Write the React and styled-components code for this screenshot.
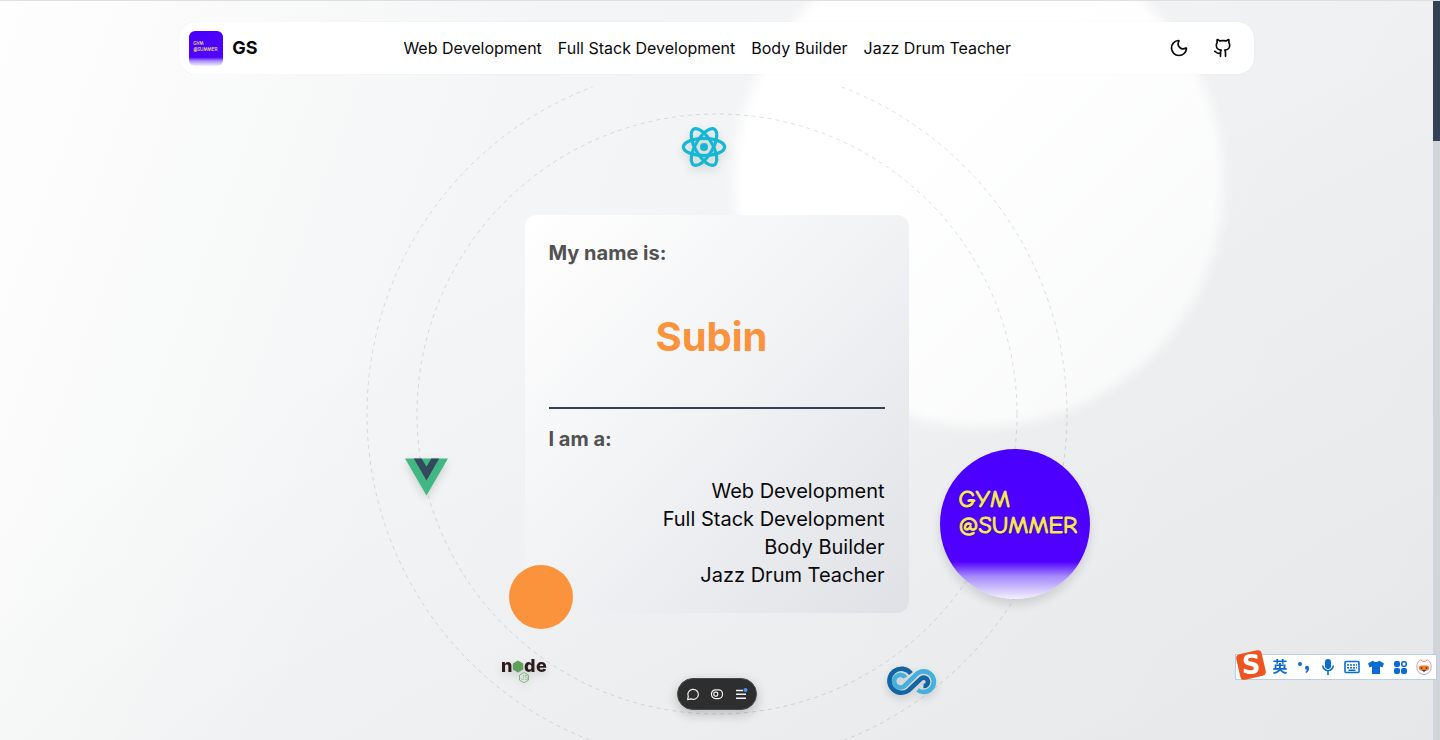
import React from 'react';
import styled, { createGlobalStyle, css } from 'styled-components';
import { Moon, Github } from 'lucide-react';

const SERVICES = ['Web Development', 'Full Stack Development', 'Body Builder', 'Jazz Drum Teacher'];

const GlobalStyle = createGlobalStyle`
  *, *::before, *::after { box-sizing: border-box; }
  body {
    margin: 0;
    font-family: Inter, "Liberation Sans", sans-serif;
    font-size: 16px;
    line-height: 24px;
    color: #09090b;
  }
  ul { list-style: none; margin: 0; padding: 0; }
  h1, h2, p { margin: 0; }
  button { font: inherit; color: inherit; background: none; border: 0; padding: 0; cursor: pointer; }
  a { color: inherit; text-decoration: none; }
  svg { display: block; }
`;

const Window = styled.div`
  display: grid;
  grid-template-columns: minmax(0, 1fr) 7px;
  height: 100vh;
  overflow: hidden;
  border-top: 1px solid #dfdfe0;
`;

const Page = styled.div`
  position: relative;
  display: flex;
  flex-direction: column;
  min-height: 0;
  overflow: hidden;
  background:
    linear-gradient(155deg, transparent 35%, rgba(0, 0, 0, 0.045)),
    linear-gradient(110deg, #fefefe, #f4f5f6 32%, #f0f1f3);
`;

const Glow = styled.div`
  position: absolute;
  top: -64px;
  left: calc(50% + 17px);
  width: 490px;
  height: 490px;
  border-radius: 50%;
  background: linear-gradient(to bottom right, #ffffff 40%, #f7f8f8);
  filter: blur(6px);
`;

const ScrollTrack = styled.div`
  background: #d1d5db;
`;

const ScrollThumb = styled.div`
  height: 19%;
  background: #334155;
`;

const Header = styled.header`
  position: relative;
  display: flex;
  align-items: center;
  justify-content: space-between;
  width: 75%;
  height: 52px;
  margin: 21px auto 0;
  padding: 0 21px 0 10px;
  border-radius: 16px;
  background: #ffffff;
  box-shadow: 0 0 1px rgba(0, 0, 0, 0.12);
`;

const Brand = styled.a`
  display: flex;
  align-items: center;
  gap: 9px;
  font-size: 18px;
  font-weight: 700;
`;

const Nav = styled.nav`
  padding-right: 12px;
`;

const NavList = styled.ul`
  display: flex;
  gap: 16px;
`;

const Actions = styled.div`
  display: flex;
  gap: 24px;
`;

const IconButton = styled.button`
  display: grid;
  place-items: center;
  width: 20px;
  height: 20px;
`;

const gymFill = css`
  background: linear-gradient(#4a00ff 0%, #5000ff 75%, #a68bfd 85%, #f4f0fd 100%);
  color: #f7e75a;
  font-family: "Comic Sans MS", "Comic Neue", "Open Sans", sans-serif;
`;

const GymThumb = styled.span`
  ${gymFill}
  width: 34px;
  height: 35px;
  padding: 9px 0 0 4px;
  border-radius: 6px;
  overflow: hidden;
  font-size: 5px;
  font-weight: 600;
  line-height: 6px;
`;

const GymBadge = styled.div`
  ${gymFill}
  position: absolute;
  left: calc(50% + 223px);
  top: calc(50% + 35px);
  width: 150px;
  height: 150px;
  padding: 37px 0 0 19px;
  border-radius: 50%;
  font-size: 24px;
  line-height: 26px;
  -webkit-text-stroke: 1px #f7e75a;
  text-shadow: 1px 1px 1px #15105a;
  white-space: nowrap;
  box-shadow: 0 6px 10px rgba(0, 0, 0, 0.12);
`;

const Hero = styled.main`
  position: relative;
  flex: 1;
  display: grid;
  place-items: center;
  min-height: 0;
  margin-top: 13px;
  overflow: hidden;
`;

const Orbits = styled.svg`
  position: absolute;
  left: calc(50% - 351px);
  top: calc(50% - 351px);
  width: 702px;
  height: 702px;
`;

const Satellite = styled.svg`
  position: absolute;
  left: calc(50% + ${(p) => p.$x}px);
  top: calc(50% + ${(p) => p.$y}px);
  overflow: visible;
  filter: drop-shadow(0 4px 4px rgba(0, 0, 0, 0.14));
`;

const Card = styled.section`
  position: relative;
  width: 384px;
  padding: 24px;
  border-radius: 12px;
  background: linear-gradient(to bottom right, #ffffff, #f1f2f4 50%, #e0e1e6);
`;

const CardLabel = styled.h2`
  font-size: 20px;
  font-weight: 700;
  line-height: 28px;
  color: #525252;
`;

const NameRow = styled.div`
  display: flex;
  justify-content: center;
  padding: 40px 10px 40px 0;
  border-bottom: 2px solid #334155;
  margin-bottom: 16px;
`;

const Name = styled.h1`
  font-size: 40px;
  font-weight: 700;
  line-height: 60px;
  color: #fb923c;
`;

const Roles = styled.ul`
  padding-top: 24px;
  font-size: 20px;
  line-height: 28px;
  text-align: right;
`;

const Dot = styled.div`
  position: absolute;
  left: -16px;
  bottom: -16px;
  width: 64px;
  height: 64px;
  border-radius: 50%;
  background: #fb923c;
`;

const Dock = styled.div`
  position: absolute;
  left: calc(50% - 40px);
  bottom: 30px;
  display: flex;
  align-items: center;
  justify-content: center;
  gap: 8px;
  width: 80px;
  height: 32px;
  border-radius: 16px;
  background: #2e2e2e;
  border: 1px solid #4a4a4a;
  color: #f2f2f2;
  box-shadow: 0 4px 12px rgba(0, 0, 0, 0.22);
`;

const DockButton = styled.button`
  width: 16px;
  height: 16px;
`;

const InputBar = styled.div`
  position: fixed;
  right: 3px;
  bottom: 60px;
  display: flex;
  align-items: center;
  gap: 8px;
  height: 26px;
  padding: 0 4px 0 0;
  background: #ffffff;
  border: 1px solid #b9cfe6;
  color: #0a6cd0;
`;

const InputLogo = styled.svg`
  margin: -4px -4px 0 0;
  flex: none;
  overflow: visible;
`;

const InputButton = styled.button`
  width: 16px;
  height: 16px;
  font-family: Inter, "Noto Sans CJK SC", sans-serif;
  font-size: 15px;
  font-weight: 700;
  line-height: 16px;
`;

function ReactLogo() {
  return (
    <Satellite $x={-36} $y={-288} width="46" height="42" viewBox="-23 -21 46 42" fill="none" stroke="#14b8d4" strokeWidth="3.200">
      {[0, 60, 120].map((angle) => (
        <ellipse key={angle} rx="20.600" ry="8.600" transform={`rotate(${angle})`} />
      ))}
      <circle r="4" fill="#14b8d4" stroke="none" />
    </Satellite>
  );
}

function VueLogo() {
  return (
    <Satellite $x={-312} $y={44} width="43" height="38" viewBox="0 0 44 38">
      <path d="M0 0h44L22 38z" fill="#41b883" />
      <path d="M9 0h8l5 8.500 5-8.500h8L22 22.500z" fill="#34495e" />
    </Satellite>
  );
}

function NodeLogo() {
  return (
    <Satellite $x={-215} $y={241} width="46" height="30" viewBox="0 0 46 30">
      <g fill="#2a1a1c" fontFamily="Inter, sans-serif" fontWeight="800" fontSize="18">
        <text x="-1" y="17">n</text>
        <text x="22" y="17">d</text>
        <text x="34" y="17">e</text>
      </g>
      <path d="M16 5.500l5.200 3v6l-5.200 3-5.200-3v-6z" fill="#5fa05b" />
      <path d="M22 17.500l4.500 2.600v5L22 27.700l-4.500-2.600v-5z" fill="none" stroke="#7db77a" />
      <text x="19" y="25" fill="#7db77a" fontFamily="Inter, sans-serif" fontSize="6">JS</text>
    </Satellite>
  );
}

function LoopLogo() {
  return (
    <Satellite $x={169} $y={253} width="51" height="29" viewBox="1 0 50 29" fill="none">
      <path d="M25.500 6.500A12 12 0 1 0 23 23.500L35.500 11.700A4.200 4.200 0 1 1 38 19" stroke="#1264a5" strokeWidth="4.600" />
      <path d="M20 10.500A6.300 6.300 0 1 0 19 19L31 7.200A10.300 10.300 0 1 1 32 23" stroke="#45b0dc" strokeWidth="4.600" />
    </Satellite>
  );
}

function ToolDock() {
  return (
    <Dock>
      <DockButton aria-label="Comments">
        <svg width="16" height="16" viewBox="0 0 16 16" fill="none" stroke="currentColor" strokeWidth="1.200">
          <path d="M2.600 13.600l.7-3.200a5.300 5 0 1 1 2.700 2.500z" strokeLinejoin="round" />
        </svg>
      </DockButton>
      <DockButton aria-label="Preview">
        <svg width="16" height="16" viewBox="0 0 16 16" fill="none" stroke="currentColor" strokeWidth="1.200">
          <rect x="2.500" y="3.800" width="11" height="8.800" rx="4" />
          <rect x="4.800" y="6.200" width="4" height="4" rx="1.600" />
        </svg>
      </DockButton>
      <DockButton aria-label="Menu">
        <svg width="16" height="16" viewBox="0 0 16 16" stroke="currentColor" strokeWidth="1.400">
          <path d="M3 4.500h7M3 8.300h10M3 12.200h10" />
          <circle cx="12.500" cy="4" r="2" fill="#4b96f5" stroke="none" />
        </svg>
      </DockButton>
    </Dock>
  );
}

function InputMethodBar() {
  return (
    <InputBar>
      <InputLogo width="32" height="32" viewBox="0 0 32 32">
        <rect x="2" y="3" width="26" height="26" rx="4" fill="#ee5420" transform="rotate(-13 15 16)" />
        <text x="15" y="25" textAnchor="middle" fill="#ffffff" fontFamily="DejaVu Sans, sans-serif" fontWeight="700" fontSize="26">S</text>
      </InputLogo>
      <InputButton>英</InputButton>
      <InputButton aria-label="Punctuation">
        <svg width="16" height="16" viewBox="0 0 16 16" fill="currentColor">
          <circle cx="4" cy="5" r="2" />
          <path d="M9 8.500a2 2 0 1 1 4 .5c0 2.500-1 4-3 5l-.6-1c1-.6 1.400-1.400 1.400-2.200A2 2 0 0 1 9 8.500z" />
        </svg>
      </InputButton>
      <InputButton aria-label="Voice input">
        <svg width="16" height="16" viewBox="0 0 16 16" fill="none" stroke="currentColor" strokeWidth="1.600">
          <rect x="5" y="0" width="6" height="10" rx="3" fill="currentColor" stroke="none" />
          <path d="M2.800 6.500a5.200 5.200 0 0 0 10.400 0M8 12v4" />
        </svg>
      </InputButton>
      <InputButton aria-label="Keyboard">
        <svg width="16" height="16" viewBox="0 0 16 16" fill="none" stroke="currentColor" strokeWidth="1.600">
          <rect x="1" y="2.500" width="14" height="11" rx="1" />
          <path d="M3 6h10M3 8.700h10" strokeDasharray="2 1" />
          <path d="M4.500 11.300h7" />
        </svg>
      </InputButton>
      <InputButton aria-label="Skins">
        <svg width="16" height="16" viewBox="0 0 16 16" fill="currentColor">
          <path d="M5 1.500c1 2 5 2 6 0l5 3-1.500 4-2.500-1V15H4V7.500l-2.500 1L0 4.500z" />
        </svg>
      </InputButton>
      <InputButton aria-label="Toolbox">
        <svg width="16" height="16" viewBox="0 0 16 16" fill="currentColor">
          <rect x="2" y="2" width="6" height="6" rx="2" />
          <rect x="2" y="9" width="6" height="6" rx="2" />
          <rect x="9" y="9" width="6" height="6" rx="2" />
          <rect x="9.800" y="2.800" width="4.400" height="4.400" rx="1.500" fill="none" stroke="currentColor" strokeWidth="1.600" />
        </svg>
      </InputButton>
      <InputButton aria-label="Assistant">
        <svg width="16" height="16" viewBox="0 0 16 16">
          <path d="M1 9C0.500 4 3 1 4.500 .8L7 2.500h2L11.500 .8C13 1 15.500 4 15 9" fill="#ffffff" stroke="#f28b8b" />
          <path d="M1 9a7 6.500 0 0 0 14 0" fill="#ffffff" stroke="#a9a6ee" />
          <rect x="3" y="6.500" width="10" height="5" rx="2" fill="#f07a22" />
          <path d="M5.500 8v2M10.500 8v2" stroke="#7a3412" strokeWidth="1.200" />
          <path d="M5.500 11h5l-2.500 2z" fill="#4a3540" />
        </svg>
      </InputButton>
    </InputBar>
  );
}

export default function App() {
  return (
    <Window>
      <GlobalStyle />
      <Page>
        <Glow />
        <Header>
          <Brand href="#">
            <GymThumb aria-hidden="true">GYM<br />@SUMMER</GymThumb>
            GS
          </Brand>
          <Nav>
            <NavList>
              {SERVICES.map((name) => (
                <li key={name}><a href="#">{name}</a></li>
              ))}
            </NavList>
          </Nav>
          <Actions>
            <IconButton aria-label="Toggle theme"><Moon size={20} /></IconButton>
            <IconButton aria-label="GitHub"><Github size={20} /></IconButton>
          </Actions>
        </Header>
        <Hero>
          <Orbits viewBox="-351 -351 702 702" fill="none" stroke="#000000" strokeOpacity="0.12" strokeDasharray="4 4">
            <circle r="300" />
            <circle r="350" />
          </Orbits>
          <ReactLogo />
          <VueLogo />
          <NodeLogo />
          <LoopLogo />
          <GymBadge>GYM<br />@SUMMER</GymBadge>
          <Card>
            <CardLabel>My name is:</CardLabel>
            <NameRow><Name>Subin</Name></NameRow>
            <CardLabel>I am a:</CardLabel>
            <Roles>
              {SERVICES.map((name) => <li key={name}>{name}</li>)}
            </Roles>
            <Dot />
          </Card>
          <ToolDock />
        </Hero>
      </Page>
      <ScrollTrack><ScrollThumb /></ScrollTrack>
      <InputMethodBar />
    </Window>
  );
}
